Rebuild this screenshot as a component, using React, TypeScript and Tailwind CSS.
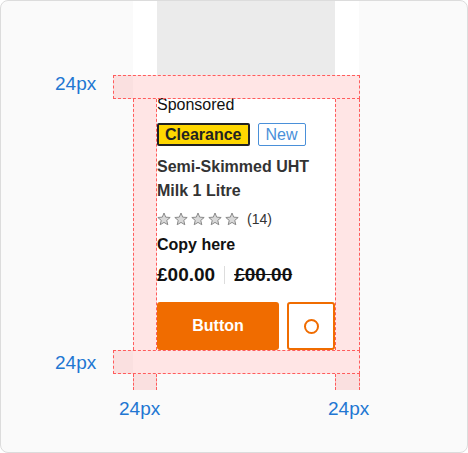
import React from "react";

const Star = () => (
  <svg width="14" height="14" viewBox="0 0 14 14" className="block">
    <polygon
      points="7,1 8.7,5.15 13.18,5.49 9.76,8.4 10.82,12.76 7,10.4 3.18,12.76 4.24,8.4 0.82,5.49 5.3,5.15"
      fill="#d9d9d9"
      stroke="#8a8a8a"
      strokeWidth="1"
      strokeLinejoin="round"
    />
  </svg>
);

export default function App() {
  return (
    <div
      className="relative w-[468px] h-[453px] bg-[#fafafa] border border-[#dcdcdc] rounded-[8px] overflow-hidden"
      style={{ fontFamily: '"Liberation Sans", Arial, sans-serif' }}
    >
      {/* Card */}
      <div className="ml-[132px] w-[226px] bg-white px-[24px] pb-[24px]">
        <div className="h-[74px] bg-[#ebebeb]" />
        <div className="pt-[22px] flex flex-col">
          <div className="text-[16px] leading-[16px] text-[#111]">Sponsored</div>
          <div className="mt-[10px] flex gap-[8px]">
            <span className="h-[23px] px-[6px] border-2 border-[#222] bg-[#ffd700] rounded-[2px] text-[16px] leading-[19px] font-bold text-[#222]">
              Clearance
            </span>
            <span className="h-[23px] px-[7px] border border-[#4a90d9] bg-white rounded-[2px] text-[16px] leading-[21px] text-[#4a90d9]">
              New
            </span>
          </div>
          <div className="mt-[9px] text-[16px] leading-[24px] font-bold text-[#333]">
            Semi-Skimmed UHT
            <br />
            Milk 1 Litre
          </div>
          <div className="mt-[8px] h-[16px] flex items-center">
            <div className="flex gap-[3px]">
              <Star />
              <Star />
              <Star />
              <Star />
              <Star />
            </div>
            <span className="ml-[8px] text-[14px] leading-[16px] text-[#333]">(14)</span>
          </div>
          <div className="mt-[6px] text-[16px] leading-[24px] font-bold text-[#111]">Copy here</div>
          <div className="mt-[6px] flex items-center h-[24px]">
            <span className="text-[19px] leading-[24px] font-bold text-[#111]">£00.00</span>
            <span className="mx-[9px] w-px h-[18px] bg-[#dddddd]" />
            <span className="text-[19px] leading-[24px] font-bold text-[#111] line-through">£00.00</span>
          </div>
          <div className="mt-[15px] flex gap-[8px]">
            <button className="w-[122px] h-[48px] bg-[#f06c00] rounded-[3px] text-white text-[16px] font-bold">
              Button
            </button>
            <button className="w-[48px] h-[48px] bg-white border-2 border-[#f06c00] rounded-[3px] flex items-center justify-center">
              <span className="w-[15px] h-[15px] rounded-full border-2 border-[#f06c00]" />
            </button>
          </div>
        </div>
      </div>

      {/* Spacing annotations */}
      <div className="absolute left-[112px] top-[74px] w-[247px] h-[24px] bg-[rgba(255,0,0,0.1)] border border-dashed border-[#ff5c5c]" />
      <div className="absolute left-[112px] top-[349px] w-[247px] h-[24px] bg-[rgba(255,0,0,0.1)] border border-dashed border-[#ff5c5c]" />
      <div className="absolute left-[132px] top-[98px] w-[24px] h-[251px] bg-[rgba(255,0,0,0.1)] border-x border-dashed border-[#ff5c5c]" />
      <div className="absolute left-[334px] top-[98px] w-[25px] h-[251px] bg-[rgba(255,0,0,0.1)] border-x border-dashed border-[#ff5c5c]" />
      <div className="absolute left-[132px] top-[373px] w-[24px] h-[16px] bg-[rgba(255,0,0,0.1)] border-x border-dashed border-[#ff5c5c]" />
      <div className="absolute left-[334px] top-[373px] w-[25px] h-[16px] bg-[rgba(255,0,0,0.1)] border-x border-dashed border-[#ff5c5c]" />

      <span className="absolute left-[54px] top-[73px] text-[19px] leading-[19px] text-[#2176d2]">24px</span>
      <span className="absolute left-[54px] top-[352px] text-[19px] leading-[19px] text-[#2176d2]">24px</span>
      <span className="absolute left-[118px] top-[398px] text-[19px] leading-[19px] text-[#2176d2]">24px</span>
      <span className="absolute left-[327px] top-[398px] text-[19px] leading-[19px] text-[#2176d2]">24px</span>
    </div>
  );
}
